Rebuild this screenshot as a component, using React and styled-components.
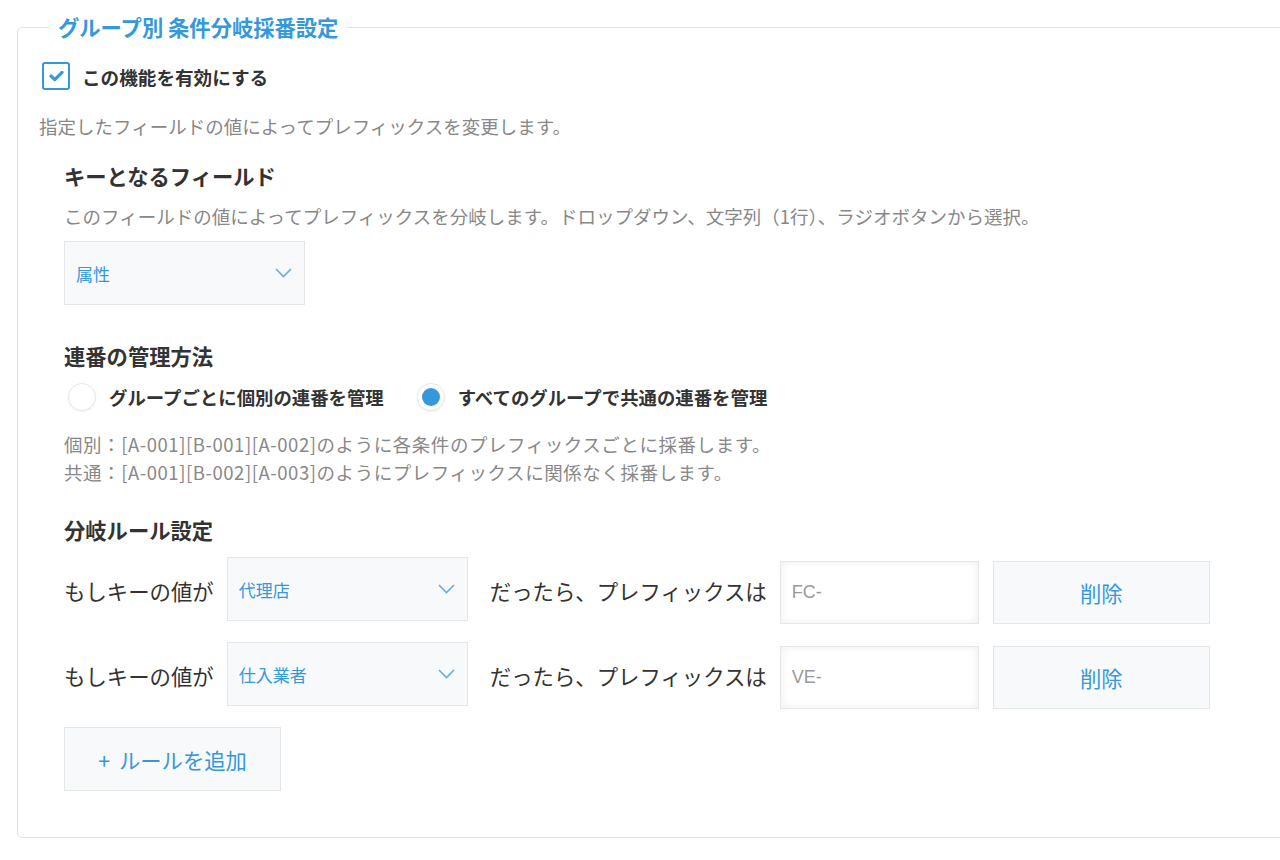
import React from "react";
import styled, { createGlobalStyle } from "styled-components";

const GlobalStyle = createGlobalStyle`
  html, body {
    margin: 0;
    padding: 0;
    background: #fff;
    overflow: hidden;
  }
  body {
    font-family: "Noto Sans CJK JP", "Noto Sans", sans-serif;
    color: #333;
  }
`;

const Page = styled.div`
  padding: 16px 0 0 17px;
  width: 1320px;
`;

const Fieldset = styled.fieldset`
  margin: 0;
  border: 1px solid #e3e3e3;
  border-radius: 5px;
  padding: 0 21px 46px 21px;
  min-width: 0;
`;

const Legend = styled.legend`
  margin-left: 11px;
  padding: 0 8px;
  font-size: 21.3px;
  line-height: 22px;
  font-weight: 700;
  color: #3498db;
`;

const CheckRow = styled.label`
  display: flex;
  align-items: center;
  gap: 12px;
  margin: 24px 0 0 3px;
  height: 28px;
  font-size: 18.6px;
  font-weight: 700;
  color: #333;
`;

const CheckBox = styled.span`
  box-sizing: border-box;
  width: 28px;
  height: 28px;
  border: 2px solid #3498db;
  border-radius: 3px;
  display: flex;
  align-items: center;
  justify-content: center;
`;

const Desc = styled.p`
  margin: ${(p) => p.$top || 0}px 0 0;
  font-size: 18.5px;
  line-height: 28px;
  color: #888;
  white-space: nowrap;
`;

const Section = styled.div`
  padding-left: 25px;
  margin-top: ${(p) => p.$top}px;
`;

const Title = styled.h3`
  margin: 0;
  font-size: 21.3px;
  line-height: 30px;
  font-weight: 700;
  color: #333;
`;

const SelectBox = styled.div`
  box-sizing: border-box;
  width: 241px;
  height: 64px;
  margin-top: ${(p) => p.$top || 0}px;
  background: #f7f9fa;
  border: 1px solid #e3e7e8;
  display: flex;
  align-items: center;
  justify-content: space-between;
  padding: 0 12px 0 11px;
  font-size: 17px;
  color: #3498db;
  flex-shrink: 0;
`;

const RadioGroup = styled.div`
  display: flex;
  align-items: center;
  margin: 12px 0 0 4px;
  height: 28px;
`;

const RadioItem = styled.label`
  display: flex;
  align-items: center;
  gap: 13px;
  margin-right: 33px;
  font-size: 18.4px;
  font-weight: 700;
  color: #333;
`;

const RadioCircle = styled.span`
  box-sizing: border-box;
  width: 28px;
  height: 28px;
  border-radius: 50%;
  background: #fff;
  border: 1px solid #e6e8ea;
  box-shadow: 0 1px 2px rgba(0, 0, 0, 0.06);
  display: flex;
  align-items: center;
  justify-content: center;
  &::after {
    content: "";
    width: 18px;
    height: 18px;
    border-radius: 50%;
    background: ${(p) => (p.$checked ? "#3498db" : "transparent")};
  }
`;

const Notes = styled.div`
  margin-top: 19px;
  letter-spacing: 0.55px;
`;

const RuleRow = styled.div`
  display: flex;
  align-items: flex-start;
  margin-top: ${(p) => p.$top}px;
`;

const RuleText = styled.span`
  margin-top: 2px;
  line-height: 63px;
  font-size: 21.4px;
  color: #333;
  white-space: nowrap;
  margin-left: ${(p) => p.$before || 0}px;
  margin-right: ${(p) => p.$gap}px;
`;

const PrefixInput = styled.div`
  box-sizing: border-box;
  margin-top: 4px;
  width: 199px;
  height: 63px;
  border: 1px solid #e3e7e8;
  background: #fff;
  box-shadow: inset 0 0 8px rgba(0, 0, 0, 0.07);
  padding-left: 11px;
  display: flex;
  align-items: center;
  font-size: 18px;
  color: #999;
  font-family: "Liberation Sans", "Noto Sans CJK JP", sans-serif;
  margin-right: 14px;
`;

const ActionButton = styled.button`
  box-sizing: border-box;
  margin-top: ${(p) => p.$top || 0}px;
  width: 217px;
  height: ${(p) => p.$h || 63}px;
  border: 1px solid #e3e7e8;
  background: #f7f9fa;
  color: #3498db;
  font-family: "Noto Sans CJK JP", sans-serif;
  font-size: 21.3px;
  display: flex;
  align-items: center;
  justify-content: center;
  gap: 9px;
  padding: 0;
  cursor: pointer;
`;

const Chevron = () => (
  <svg width="17" height="10" viewBox="0 0 17 10" fill="none">
    <polyline points="1,1 8.5,8.5 16,1" stroke="#67acdf" strokeWidth="1.6" />
  </svg>
);

const Select = ({ value, top }) => (
  <SelectBox $top={top}>
    <span>{value}</span>
    <Chevron />
  </SelectBox>
);

const rules = [
  { key: "代理店", prefix: "FC-", top: 12 },
  { key: "仕入業者", prefix: "VE-", top: 18 },
];

export default function App() {
  return (
    <>
      <GlobalStyle />
      <Page>
        <Fieldset>
          <Legend>グループ別 条件分岐採番設定</Legend>
          <CheckRow>
            <CheckBox>
              <svg width="15" height="12" viewBox="0 0 15 12" fill="none">
                <polyline
                  points="2,6 5.8,9.6 13,2.4"
                  stroke="#3498db"
                  strokeWidth="3.2"
                  strokeLinecap="round"
                  strokeLinejoin="round"
                />
              </svg>
            </CheckBox>
            この機能を有効にする
          </CheckRow>
          <Desc $top={22}>指定したフィールドの値によってプレフィックスを変更します。</Desc>

          <Section $top={21}>
            <Title>キーとなるフィールド</Title>
            <Desc $top={11}>
              このフィールドの値によってプレフィックスを分岐します。ドロップダウン、文字列（1行）、ラジオボタンから選択。
            </Desc>
            <Select value="属性" top={11} />
          </Section>

          <Section $top={36}>
            <Title>連番の管理方法</Title>
            <RadioGroup>
              <RadioItem>
                <RadioCircle />
                グループごとに個別の連番を管理
              </RadioItem>
              <RadioItem>
                <RadioCircle $checked />
                すべてのグループで共通の連番を管理
              </RadioItem>
            </RadioGroup>
            <Notes>
              <Desc>個別：[A-001][B-001][A-002]のように各条件のプレフィックスごとに採番します。</Desc>
              <Desc>共通：[A-001][B-002][A-003]のようにプレフィックスに関係なく採番します。</Desc>
            </Notes>
          </Section>

          <Section $top={29}>
            <Title>分岐ルール設定</Title>
            {rules.map((r) => (
              <RuleRow key={r.key} $top={r.top}>
                <RuleText $gap={13}>もしキーの値が</RuleText>
                <Select value={r.key} />
                <RuleText $before={22} $gap={13}>
                  だったら、プレフィックスは
                </RuleText>
                <PrefixInput>{r.prefix}</PrefixInput>
                <ActionButton $top={4}>削除</ActionButton>
              </RuleRow>
            ))}
            <ActionButton $top={18} $h={64}>
              <span>+</span>ルールを追加
            </ActionButton>
          </Section>
        </Fieldset>
      </Page>
    </>
  );
}
